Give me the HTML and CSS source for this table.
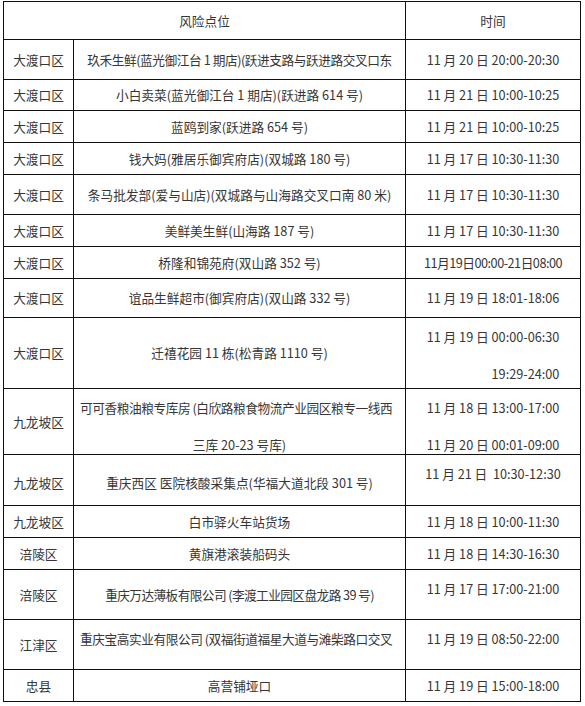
FILE: index.html
```html
<!DOCTYPE html>
<html lang="zh-CN">
<head>
<meta charset="utf-8">
<title>风险点位</title>
<link rel="stylesheet" href="styles.css">
</head>
<body>
<table class="risk">
  <colgroup>
    <col class="c-area">
    <col class="c-place">
    <col class="c-time">
  </colgroup>
  <thead>
    <tr class="h38">
      <th colspan="2">风险点位</th>
      <th>时间</th>
    </tr>
  </thead>
  <tbody>
    <tr class="h40">
      <td>大渡口区</td>
      <td class="tight">玖禾生鲜(蓝光御江台 1 期店)(跃进支路与跃进路交叉口东</td>
      <td>11 月 20 日 20:00-20:30</td>
    </tr>
    <tr class="h31">
      <td>大渡口区</td>
      <td>小白卖菜(蓝光御江台 1 期店)(跃进路 614 号)</td>
      <td>11 月 21 日 10:00-10:25</td>
    </tr>
    <tr class="h32">
      <td>大渡口区</td>
      <td>蓝鸥到家(跃进路 654 号)</td>
      <td>11 月 21 日 10:00-10:25</td>
    </tr>
    <tr class="h32">
      <td>大渡口区</td>
      <td>钱大妈(雅居乐御宾府店)(双城路 180 号)</td>
      <td>11 月 17 日 10:30-11:30</td>
    </tr>
    <tr class="h40">
      <td>大渡口区</td>
      <td>条马批发部(爱与山店)(双城路与山海路交叉口南 80 米)</td>
      <td>11 月 17 日 10:30-11:30</td>
    </tr>
    <tr class="h32">
      <td>大渡口区</td>
      <td>美鲜美生鲜(山海路 187 号)</td>
      <td>11 月 17 日 10:30-11:30</td>
    </tr>
    <tr class="h32">
      <td>大渡口区</td>
      <td>桥隆和锦苑府(双山路 352 号)</td>
      <td class="compact">11月19日00:00-21日08:00</td>
    </tr>
    <tr class="h39">
      <td>大渡口区</td>
      <td>谊品生鲜超市(御宾府店)(双山路 332 号)</td>
      <td>11 月 19 日 18:01-18:06</td>
    </tr>
    <tr class="h71">
      <td>大渡口区</td>
      <td>迁禧花园 11 栋(松青路 1110 号)</td>
      <td class="top">
        <div class="stack">
          <div class="ln">11 月 19 日 00:00-06:30</div>
          <div class="ln next">19:29-24:00</div>
        </div>
      </td>
    </tr>
    <tr class="h66">
      <td>九龙坡区</td>
      <td class="top left">
        <div class="ln tight">可可香粮油粮专库房 (白欣路粮食物流产业园区粮专一线西</div>
        <div class="ln next center">三库 20-23 号库)</div>
      </td>
      <td class="top">
        <div class="ln">11 月 18 日 13:00-17:00</div>
        <div class="ln next">11 月 20 日 00:01-09:00</div>
      </td>
    </tr>
    <tr class="h51">
      <td class="low">九龙坡区</td>
      <td class="low">重庆西区 医院核酸采集点(华福大道北段 301 号)</td>
      <td class="top">11 月 21 日&nbsp;&nbsp;10:30-12:30</td>
    </tr>
    <tr class="h32">
      <td>九龙坡区</td>
      <td>白市驿火车站货场</td>
      <td>11 月 18 日 10:00-11:30</td>
    </tr>
    <tr class="h32">
      <td>涪陵区</td>
      <td>黄旗港滚装船码头</td>
      <td>11 月 18 日 14:30-16:30</td>
    </tr>
    <tr class="h50">
      <td>涪陵区</td>
      <td class="narrow">重庆万达薄板有限公司 (李渡工业园区盘龙路 39 号)</td>
      <td class="top">11 月 17 日 17:00-21:00</td>
    </tr>
    <tr class="h50">
      <td>江津区</td>
      <td class="top left tight">重庆宝高实业有限公司 (双福街道福星大道与滩柴路口交叉</td>
      <td class="top">11 月 19 日 08:50-22:00</td>
    </tr>
    <tr class="h32">
      <td>忠县</td>
      <td>高营铺垭口</td>
      <td>11 月 19 日 15:00-18:00</td>
    </tr>
  </tbody>
</table>
</body>
</html>
```

FILE: styles.css
```css
html, body {
  margin: 0;
  background: #ffffff;
}

body {
  padding: 1px 0 0 3px;
  font-family: "Noto Sans CJK SC", "Noto Sans", sans-serif;
  font-size: 12.7px;
  color: #363636;
}

.risk {
  border-collapse: collapse;
  table-layout: fixed;
  width: 577px;
}

.c-area { width: 70px; }
.c-place { width: 332px; }
.c-time { width: 175px; }

.risk th,
.risk td {
  border: 1px solid #111111;
  padding: 0 6px;
  text-align: center;
  vertical-align: middle;
  white-space: nowrap;
  font-weight: normal;
  line-height: 18px;
  overflow: visible;
}

.risk td.top {
  vertical-align: top;
  padding-top: 10px;
}

.risk td.low {
  padding-top: 5px;
}

.risk td.left {
  text-align: left;
}

.ln.next {
  margin-top: 19px;
}

.ln.center {
  text-align: center;
  letter-spacing: 0;
}

.stack {
  display: inline-block;
  text-align: right;
}

.tight {
  letter-spacing: -0.45px;
}

.narrow {
  letter-spacing: -0.6px;
}

.compact {
  letter-spacing: -0.5px;
}

.h31 { height: 31px; }
.h32 { height: 32px; }
.h38 { height: 38px; }
.h39 { height: 39px; }
.h40 { height: 40px; }
.h50 { height: 50px; }
.h51 { height: 51px; }
.h66 { height: 66px; }
.h71 { height: 71px; }
```
